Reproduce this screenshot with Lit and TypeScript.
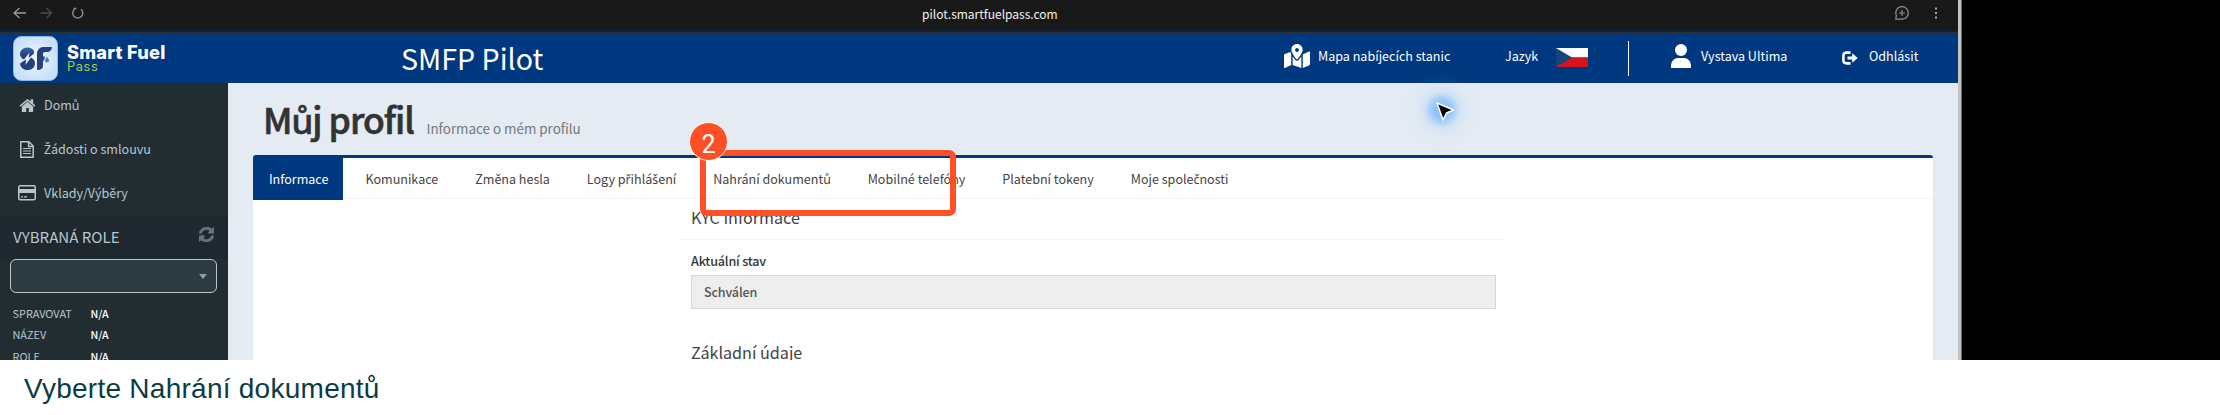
import { LitElement, html, css } from "lit";
import { customElement } from "lit/decorators.js";

const tx = (s: string) =>
  s.split(/([ůŽřčš])/).map((p, i) => (i % 2 ? html`<span class="dia">${p}</span>` : p));

const HOME = "M1472 992v480q0 26-19 45t-45 19h-384v-384h-256v384h-384q-26 0-45-19t-19-45v-480q0-1 .5-3t.5-3l575-474 575 474q1 2 1 6zm223-69l-62 74q-8 9-21 11h-3q-13 0-21-7l-692-577-692 577q-12 8-24 7-13-2-21-11l-62-74q-8-10-7-23.5t11-21.5l719-599q32-26 76-26t76 26l244 204v-195q0-14 9-23t23-9h192q14 0 23 9t9 23v408l219 182q10 8 11 21.5t-7 23.5z";
const REFRESH = "M1639 1056q0 5-1 7-64 268-268 434.500t-478 166.500q-146 0-282.500-55t-243.500-157l-129 129q-19 19-45 19t-45-19-19-45v-448q0-26 19-45t45-19h448q26 0 45 19t19 45-19 45l-137 137q71 66 161 102t187 36q134 0 250-65t186-179q11-17 53-117 8-23 30-23h192q13 0 22.500 9.500t9.500 22.500zm25-800v448q0 26-19 45t-45 19h-448q-26 0-45-19t-19-45 19-45l138-138q-148-137-349-137-134 0-250 65t-186 179q-11 17-53 117-8 23-30 23h-199q-13 0-22.500-9.500t-9.500-22.500v-7q65-268 270-434.500t480-166.500q146 0 284 55.500t245 156.500l130-129q19-19 45-19t45 19 19 45z";
const MAP = "M288 0c-69.590 0-126 56.410-126 126 0 56.260 82.350 158.800 113.900 196.020 6.390 7.540 17.820 7.540 24.200 0C331.650 284.800 414 182.260 414 126 414 56.410 357.590 0 288 0zm0 168c-23.200 0-42-18.800-42-42s18.800-42 42-42 42 18.800 42 42-18.800 42-42 42zM20.120 215.950A32.006 32.006 0 0 0 0 245.660v250.320c0 11.320 11.430 19.060 21.940 14.860L160 448V214.920c-8.840-15.980-16.070-31.540-21.250-46.420L20.120 215.950zM288 359.670c-14.070 0-27.380-6.180-36.510-16.960-19.660-23.200-40.570-49.620-59.490-76.720v182l192 64V266c-18.920 27.090-39.820 53.520-59.490 76.720-9.130 10.770-22.440 16.950-36.510 16.950zm266.060-198.510L416 224v288l139.880-55.950A31.996 31.996 0 0 0 576 426.340V176.020c0-11.320-11.430-19.060-21.940-14.860z";

const icons = {
  home: html`<svg width="17" height="17" viewBox="32 120 1728 1536"><path fill="currentColor" d=${HOME} /></svg>`,
  file: html`<svg width="14" height="17" viewBox="0 0 14 17"><path fill="none" stroke="currentColor" stroke-width="1.500" d="M.8.8h8L13.200 5v11.200H.8zM8.600.8v4.600h4.600" /><path stroke="currentColor" stroke-width="1.200" d="M3 7.500h8M3 10h8M3 12.500h8" /></svg>`,
  card: html`<svg width="18" height="16" viewBox="0 0 18 16"><rect x=".75" y=".75" width="16.500" height="14" rx="1.500" fill="none" stroke="currentColor" stroke-width="1.500" /><path fill="currentColor" d="M1 4h16v4H1zM3 11.200h2v1.200H3zM6 11.200h3v1.200H6z" /></svg>`,
};

const tabs = ["Informace", "Komunikace", "Změna hesla", "Logy přihlášení", "Nahrání dokumentů", "Mobilné telefóny", "Platební tokeny", "Moje společnosti"];

@customElement("app-root")
export class AppRoot extends LitElement {
  static styles = css`
    :host { display: block; position: relative; width: 2220px; height: 415px; overflow: hidden; background: #fff;
      font-family: "Noto Sans CJK SC", "Noto Sans", sans-serif; font-size: 12.550px; line-height: 20px; }
    * { box-sizing: border-box; }
    svg { display: block; flex: none; }
    .dia { font-family: "Noto Sans", sans-serif; font-size: .98em; line-height: 0; }
    .shot { display: flex; height: 360px; background: #000; overflow: hidden; }
    .win { width: 1958px; height: 360px; flex: none; }
    .edge { width: 4px; flex: none; background: linear-gradient(90deg, #c4c4c4 0 75%, #666 75%); }
    .chrome { height: 33px; background: #191919; border-bottom: 1px solid #2b2d30; box-shadow: inset 0 -2px #11222e;
      display: grid; grid-template-columns: 918px 1fr 80px; color: #f2f2f2; font-size: 12px; }
    .chrome > * { height: 27px; }
    .url { padding: 4px 0 0 4px; }
    .head { height: 50px; background: #00387f; color: #fff; display: grid;
      grid-template-columns: 401px 883px 221px 123px 43px 171px 116px; align-items: center; }
    .logo { display: flex; align-items: center; gap: 9px; padding-left: 13px; height: 50px; }
    .brand { font-family: Inter, sans-serif; }
    .b1 { font-weight: 800; font-size: 18.200px; line-height: 18px; letter-spacing: .25px; white-space: nowrap; }
    .b2 { font-size: 12.800px; line-height: 12px; color: #a9cf38; letter-spacing: .6px; }
    .title { font-size: 28.600px; line-height: 34px; height: 35px; }
    .it { display: flex; align-items: center; height: 20px; margin-top: -5px; white-space: nowrap; }
    .it svg { margin-top: 1px; }
    .it svg.flag { margin-top: 4px; }
    .it .m8 { margin-left: 8px; }
    .it .m10 { margin-left: 10px; }
    .it .m11 { margin-left: 11px; }
    .it .lang { width: 51px; }
    .sep { width: 1px; height: 35px; background: #fff; }
    .body { display: flex; height: 277px; }
    .side { width: 228px; background: #222d32; color: #b8c7ce; overflow: hidden; flex: none; }
    .mi { height: 44px; display: flex; align-items: center; padding-left: 18px; }
    .mi .ic { width: 26px; display: flex; }
    .mi .ic.i0 { padding-left: 1px; }
    .mi .ic.i1 { padding-left: 2px; }
    .rh { height: 44px; background: #1e282e; display: flex; align-items: center; justify-content: space-between;
      padding: 0 14px 3px 13px; font-size: 15.100px; }
    .rh svg { color: #67747a; margin-top: -2px; }
    .sel { margin: 0 11px 10px 10px; height: 34px; border: 1px solid #b8c7ce; border-radius: 6px; background: #2c3b41;
      display: flex; justify-content: flex-end; align-items: center; padding-right: 9px; }
    .row { display: grid; grid-template-columns: 78px 1fr; padding-left: 12.500px; height: 21.300px; line-height: 21.300px; font-size: 10.900px; }
    .row b { font-weight: 500; color: #fff; font-size: 10.600px; }
    .main { flex: 1; background: #e4ebf3; padding: 0 25px; }
    .h1 { height: 72px; display: flex; align-items: baseline; padding: 12px 0 0 10px; }
    .h1 h1 { margin: 0; font-size: 35.500px; line-height: 48px; font-weight: 500; color: #333; letter-spacing: -1px; width: 163.500px; white-space: nowrap; -webkit-text-stroke: .6px #333; }
    .h1 small { font-size: 13.400px; color: #777; }
    .panel { background: #fff; border-top: 3px solid #00387f; border-radius: 3px 3px 0 0; height: 220px; overflow: hidden;
      box-shadow: 0 1px 1px rgba(0,0,0,.15); }
    .tabs { display: flex; height: 41px; border-bottom: 1px solid #f4f4f4; gap: 5.350px; }
    .tab { padding: 11px 15.700px 0 15.900px; color: #444; height: 42px; white-space: nowrap; }
    .tab.on { background: #00387f; color: #fff; width: 90px; margin-right: 1.200px; }
    .form { width: 825px; margin: 0 auto 0 428px; }
    h3 { margin: 0; font-weight: 400; font-size: 16.150px; line-height: 24px; color: #444; padding: 6px 10px 0; height: 41px; border-bottom: 1px solid #f4f4f4; }
    h3.last { border: 0; padding-top: 0; }
    .lab { font-weight: 500; color: #333; padding: 11px 0 0 10px; height: 35px; letter-spacing: -.16px; }
    .inp { margin: 0 10px 31px; height: 34px; border: 1px solid #d2d6de; background: #eee; color: #555; font-weight: 500;
      padding: 6px 12px; letter-spacing: -.16px; }
    .cap { padding-left: 24px; font: 28px/57px "Liberation Sans", Arial, sans-serif; color: #0b3c43; letter-spacing: .260px; }
    .mark { position: absolute; left: 700px; top: 150px; width: 256px; height: 66px; border: 6px solid #ff4f27; border-radius: 7px; }
    .num { position: absolute; left: 689px; top: 122px; width: 39px; height: 39px; border-radius: 50%; background: #ff4f27;
      border: 1.500px solid #fff; color: #fff; font: 25px/43px Roboto, sans-serif; text-align: center; }
    .glow { position: absolute; left: 1402px; top: 70px; width: 80px; height: 80px; border-radius: 50%;
      background: radial-gradient(circle, rgba(90,170,255,.8) 0, rgba(110,180,255,.6) 18%, rgba(140,195,250,.2) 32%, rgba(160,200,240,.06) 46%, transparent 68%); }
    .cur { position: absolute; left: 1435px; top: 101px; }
  `;

  render() {
    return html`
      <div class="shot">
        <div class="win">
          <div class="chrome">
            <svg width="100" height="27" fill="none" stroke-width="1.300">
              <path stroke="#9a9a9a" d="M26 13H14M19.500 8L14 13l5.500 5" />
              <path stroke="#4c4c4c" d="M40.500 13h11M46.500 8l5 5-5 5" />
              <path stroke="#8a8a8a" stroke-width="1.500" d="M74.500 9.300a5 5 0 1 0 6.500 0M73.500 8.600h3" />
            </svg>
            <div class="url">pilot.smartfuelpass.com</div>
            <svg width="80" height="27" fill="none" stroke="#8f8f8f">
              <path stroke-width="1.200" d="M17.800 19.200h6.500a6.300 6.300 0 1 0-6-3.600zM24 10v6M21 13h6" />
              <path fill="#a5a5a5" stroke="none" d="M57 7.500h2v2h-2zM57 12h2v2h-2zM57 16.500h2v2h-2z" />
            </svg>
          </div>
          <div class="head">
            <div class="logo">
              <svg width="45" height="45" viewBox="0 0 45 45">
                <defs>
                  <radialGradient id="bg"><stop offset="0" stop-color="#f2f8fe" /><stop offset="1" stop-color="#c9e0f7" /></radialGradient>
                  <linearGradient id="s" x2="0" y2="1"><stop offset="0" stop-color="#2e6fae" /><stop offset=".6" stop-color="#253f7c" /></linearGradient>
                </defs>
                <rect x=".5" y=".5" width="44" height="44" rx="8" fill="url(#bg)" stroke="#8fb8e2" />
                <path fill="url(#s)" d="M21 15C19 10.500 10 10 7.500 15.500c-1.500 3.700.5 6.500 3.500 8l5.500-7-.8 5.500 5.300-4.500z" />
                <path fill="#253f7c" d="M7 27.500c.5 7.500 12 9 14.500 2.500 1.500-4-.5-7-3.500-8.500l-5.500 7.500.5-5.500z" />
                <path fill="#26407e" d="M24 34V18.500c0-5 2.500-7.500 7-7.500h8c-.5 3.500-2 5-5 5h-2c-1.500 0-2 .7-2 2v2.500h2l-1 4h-1V30c0 2.500-2 4-6 4z" />
                <path fill="#3f88c5" stroke="#d8e8f8" stroke-width=".6" d="M34 20.500c1.500 2 2.300 3 2.300 4a2.300 2.300 0 0 1-4.600 0c0-1 .8-2 2.300-4z" />
              </svg>
              <div class="brand"><div class="b1">Smart Fuel</div><div class="b2">Pass</div></div>
            </div>
            <div class="title">SMFP Pilot</div>
            <div class="it"><svg width="26" height="24" viewBox="0 0 576 512" preserveAspectRatio="none"><path fill="#fff" d=${MAP} /></svg><span class="m8">Mapa nabíjecích stanic</span></div>
            <div class="it"><span class="lang">Jazyk</span>
              <svg class="flag" width="32" height="19" viewBox="0 0 32 19"><path fill="#fff" d="M0 0h32v9.500H0z" /><path fill="#d7141a" d="M0 9.500h32V19H0z" /><path fill="#11457e" d="M0 0l16 9.500L0 19z" /></svg>
            </div>
            <div class="sep"></div>
            <div class="it"><svg width="20" height="24" viewBox="0 0 20 24"><circle cx="10" cy="6" r="6" fill="#fff" /><path fill="#fff" d="M0 24v-2c0-5 3.500-8 7-8h6c3.500 0 7 3 7 8v2z" /></svg><span class="m10">Vystava Ultima</span></div>
            <div class="it"><svg class="flag" width="16" height="14" viewBox="0 0 16 14"><path fill="none" stroke="#fff" stroke-width="2.600" d="M8.500 1.600H4.500C2.500 1.600 1.400 2.700 1.400 4.500v5c0 1.800 1.100 2.900 3.100 2.900h4" /><path fill="#fff" d="M5.500 5.400h4.700V2.300L15.700 7l-5.500 4.700V8.600H5.500z" /></svg><span class="m11">Odhlásit</span></div>
          </div>
          <div class="body">
            <div class="side">
              <div class="mi"><span class="ic i0">${icons.home}</span><span>${tx("Domů")}</span></div>
              <div class="mi"><span class="ic i1">${icons.file}</span><span>${tx("Žádosti o smlouvu")}</span></div>
              <div class="mi"><span class="ic">${icons.card}</span><span>Vklady/Výběry</span></div>
              <div class="rh"><span>VYBRANÁ ROLE</span><svg width="15" height="15" viewBox="128 128 1536 1536"><path fill="currentColor" stroke="currentColor" stroke-width="70" d=${REFRESH} /></svg></div>
              <div class="sel"><svg width="8" height="5"><path fill="#999" d="M0 0h8L4 5z" /></svg></div>
              ${["SPRAVOVAT", "NÁZEV", "ROLE"].map((r) => html`<div class="row"><span>${r}</span><b>N/A</b></div>`)}
            </div>
            <div class="main">
              <div class="h1"><h1>${tx("Můj profil")}</h1><small>Informace o mém profilu</small></div>
              <div class="panel">
                <div class="tabs">${tabs.map((t, i) => html`<div class="tab ${i === 0 ? "on" : ""}">${tx(t)}</div>`)}</div>
                <div class="form">
                  <h3>KYC Informace</h3>
                  <div class="lab">Aktuální stav</div>
                  <div class="inp">Schválen</div>
                  <h3 class="last">Základní údaje</h3>
                </div>
              </div>
            </div>
          </div>
        </div>
        <div class="edge"></div>
      </div>
      <div class="cap">Vyberte Nahrání dokumentů</div>
      <div class="mark"></div>
      <div class="num">2</div>
      <div class="glow"></div>
      <svg class="cur" width="22" height="22" viewBox="0 0 22 22"><path stroke="#fff" stroke-width="1.500" stroke-linejoin="round" d="M2 2l16.500 7-7 3L8 19z" /></svg>
    `;
  }
}
